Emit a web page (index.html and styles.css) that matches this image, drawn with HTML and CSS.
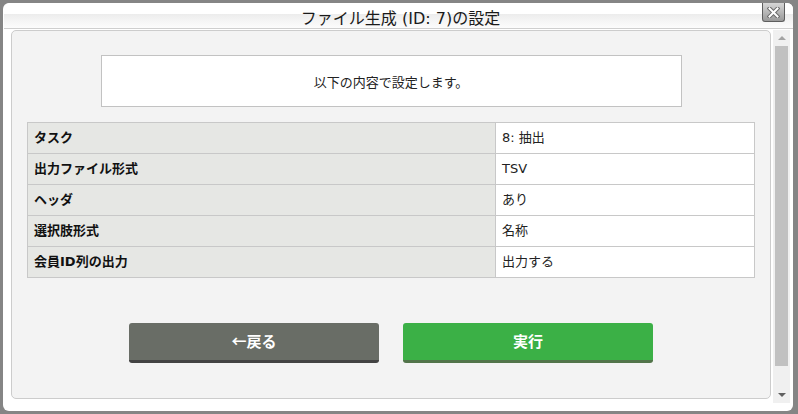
FILE: index.html
```html
<!DOCTYPE html>
<html lang="ja">
<head>
<meta charset="utf-8">
<title>ファイル生成 (ID: 7)の設定</title>
<link rel="stylesheet" href="styles.css">
</head>
<body>
<div class="dialog">
  <div class="titlebar">
    <span class="title">ファイル生成 (ID: 7)の設定</span>
  </div>
  <button class="close" aria-label="閉じる">
    <svg width="13" height="11" viewBox="0 0 13 11">
      <path d="M2.5 1.5 L10.5 9.5 M10.5 1.5 L2.5 9.5" stroke="#6a6a6a" stroke-width="4" stroke-linecap="square"/>
      <path d="M2.5 1.5 L10.5 9.5 M10.5 1.5 L2.5 9.5" stroke="#ffffff" stroke-width="2" stroke-linecap="square"/>
    </svg>
  </button>
  <div class="body">
    <div class="panel">
      <div class="message">以下の内容で設定します。</div>
      <table class="summary">
        <tr><th>タスク</th><td>8: 抽出</td></tr>
        <tr><th>出力ファイル形式</th><td>TSV</td></tr>
        <tr><th>ヘッダ</th><td>あり</td></tr>
        <tr><th>選択肢形式</th><td>名称</td></tr>
        <tr><th>会員ID列の出力</th><td>出力する</td></tr>
      </table>
      <div class="actions">
        <button class="btn btn-back">←戻る</button>
        <button class="btn btn-run">実行</button>
      </div>
    </div>
    <div class="scrollbar">
      <div class="sb-btn"><span class="arrow-up"></span></div>
      <div class="sb-thumb"></div>
      <div class="sb-rest"></div>
      <div class="sb-btn"><span class="arrow-down"></span></div>
    </div>
  </div>
</div>
</body>
</html>
```
FILE: styles.css
```css
html, body {
  margin: 0;
  padding: 0;
}
body {
  background: #858585;
  width: 798px;
  height: 414px;
  padding: 3px 5px 3px 3px;
  box-sizing: border-box;
  font-family: "DejaVu Sans", "Noto Sans CJK JP", sans-serif;
  color: #222;
}
.dialog {
  position: relative;
  width: 790px;
  height: 408px;
  background: #ffffff;
  border-radius: 6px;
  box-sizing: border-box;
}
.titlebar {
  height: 26px;
  box-sizing: border-box;
  margin: 0 0 0 1px;
  border-bottom: 1px solid #cfcfcf;
  border-radius: 6px 6px 0 0;
  background: linear-gradient(to bottom, #ffffff 0, #ffffff 11px, #ececec 11px, #f5f5f5 18px, #fcfcfc 25px);
  display: flex;
  justify-content: center;
  align-items: flex-start;
}
.title {
  font-size: 16px;
  line-height: 20px;
  margin-top: 6px;
  margin-left: 4px;
  color: #1a1a1a;
  white-space: nowrap;
}
.close {
  position: absolute;
  top: 0;
  right: 8px;
  width: 23px;
  height: 19px;
  padding: 0;
  border: 1px solid #5e5e5e;
  border-top: none;
  border-radius: 0 0 3px 3px;
  background: linear-gradient(to bottom, #d6d6d6 0, #b8b8b8 50%, #9a9a9a 100%);
  display: flex;
  align-items: center;
  justify-content: center;
}
.body {
  display: flex;
  align-items: flex-start;
  padding: 1px 3px 0 8px;
}
.panel {
  width: 760px;
  box-sizing: border-box;
  background: #f3f3f3;
  border: 1px solid #cccccc;
  border-radius: 5px;
  padding: 24px 15px 35px 15px;
}
.message {
  width: 581px;
  height: 52px;
  box-sizing: border-box;
  margin: 0 auto;
  background: #ffffff;
  border: 1px solid #c2c2c2;
  display: flex;
  align-items: center;
  justify-content: center;
  font-size: 13px;
  color: #222;
  padding-top: 1px;
}
.summary {
  width: 728px;
  margin-top: 15px;
  border-collapse: collapse;
  font-size: 13px;
}
.summary th, .summary td {
  border: 1px solid #c8c8c8;
  height: 30px;
  padding: 0 6px;
  line-height: 30px;
  text-align: left;
  box-sizing: border-box;
}
.summary th {
  width: 468px;
  background: #e6e7e4;
  font-weight: bold;
  color: #111;
}
.summary td {
  background: #ffffff;
  color: #222;
}
.actions {
  display: flex;
  justify-content: center;
  gap: 24px;
  margin-top: 45px;
}
.btn {
  width: 250px;
  height: 40px;
  box-sizing: border-box;
  border: none;
  border-radius: 3px;
  font-family: "Noto Sans CJK JP", "Noto Sans", sans-serif;
  font-size: 15px;
  font-weight: bold;
  color: #ffffff;
  padding: 0 0 3px 0;
}
.btn-back {
  background: #696d66;
  border-bottom: 3px solid #434343;
}
.btn-run {
  background: #3bb046;
  border-bottom: 3px solid #52744a;
}
.scrollbar {
  width: 17px;
  height: 373px;
  margin-left: 2px;
  background: #f0f0f0;
  display: flex;
  flex-direction: column;
  align-items: center;
}
.sb-btn {
  height: 16px;
  width: 17px;
  display: flex;
  align-items: center;
  justify-content: center;
}
.arrow-up {
  width: 0;
  height: 0;
  border-left: 4px solid transparent;
  border-right: 4px solid transparent;
  border-bottom: 4px solid #a3a3a3;
}
.arrow-down {
  width: 0;
  height: 0;
  border-left: 4px solid transparent;
  border-right: 4px solid transparent;
  border-top: 4px solid #606060;
}
.sb-thumb {
  width: 13px;
  height: 320px;
  background: #c1c1c1;
}
.sb-rest {
  flex: 1;
}
```
